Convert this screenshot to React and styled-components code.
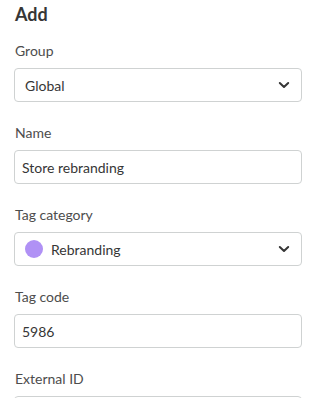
import React from "react";
import styled, { createGlobalStyle } from "styled-components";

const GlobalStyle = createGlobalStyle`
  body {
    margin: 0;
    background: #fff;
    font-family: "Lato", "Open Sans", sans-serif;
  }
`;

const Panel = styled.div`
  padding: 2px 7px 0 14px;
  height: 398px;
  overflow: hidden;
  box-sizing: border-box;
`;

const Title = styled.h3`
  margin: 0 0 15px 1px;
  font-size: 18px;
  line-height: 24px;
  font-weight: 700;
  color: #363636;
`;

const Field = styled.div`
  display: flex;
  flex-direction: column;
  gap: 7px;
  margin-bottom: 21px;
`;

const Label = styled.label`
  font-size: 14px;
  line-height: 20px;
  color: #4d4d4d;
  padding-left: 1px;
`;

const Box = styled.div`
  height: 34px;
  box-sizing: border-box;
  border: 1px solid #cfd2d2;
  border-radius: 4px;
  display: flex;
  align-items: center;
  padding: 0 ${p => (p.select ? "11px 0 10px" : "7px")};
  font-size: 14px;
  color: #363636;
  gap: 8px;
`;

const Value = styled.span`
  flex: 1;
`;

const Dot = styled.span`
  width: 18px;
  height: 18px;
  border-radius: 50%;
  background: ${p => p.color};
`;

const Chevron = () => (
  <svg width="12" height="8" viewBox="0 0 12 8">
    <polyline
      points="1.8,2 6,6 10.2,2"
      fill="none"
      stroke="#363636"
      strokeWidth="2"
      strokeLinecap="round"
      strokeLinejoin="round"
    />
  </svg>
);

export default function App() {
  return (
    <>
      <GlobalStyle />
      <Panel>
        <Title>Add</Title>
        <Field>
          <Label>Group</Label>
          <Box select>
            <Value>Global</Value>
            <Chevron />
          </Box>
        </Field>
        <Field>
          <Label>Name</Label>
          <Box>
            <Value>Store rebranding</Value>
          </Box>
        </Field>
        <Field>
          <Label>Tag category</Label>
          <Box select>
            <Dot color="#b091f5" />
            <Value>Rebranding</Value>
            <Chevron />
          </Box>
        </Field>
        <Field>
          <Label>Tag code</Label>
          <Box>
            <Value>5986</Value>
          </Box>
        </Field>
        <Field>
          <Label>External ID</Label>
          <Box />
        </Field>
      </Panel>
    </>
  );
}
